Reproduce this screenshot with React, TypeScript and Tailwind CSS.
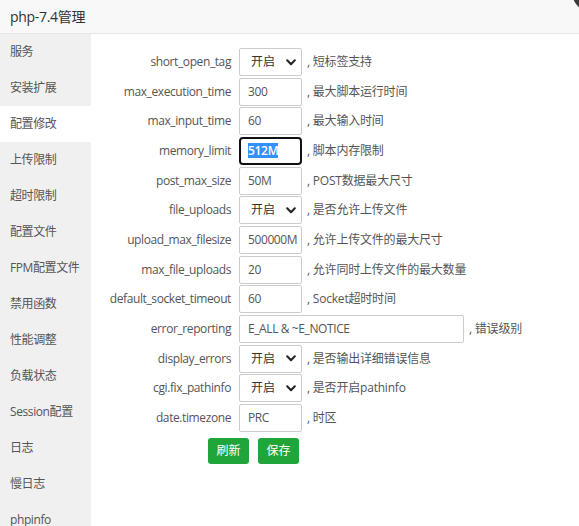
import React from "react";

const font = { fontFamily: '"Open Sans", "Noto Sans CJK SC", sans-serif' };

type Row =
  | { label: string; kind: "select"; desc: string }
  | { label: string; kind: "input"; value: string; desc: string; wide?: boolean; focus?: boolean };

const rows: Row[] = [
  { label: "short_open_tag", kind: "select", desc: ", 短标签支持" },
  { label: "max_execution_time", kind: "input", value: "300", desc: ", 最大脚本运行时间" },
  { label: "max_input_time", kind: "input", value: "60", desc: ", 最大输入时间" },
  { label: "memory_limit", kind: "input", value: "512M", desc: ", 脚本内存限制", focus: true },
  { label: "post_max_size", kind: "input", value: "50M", desc: ", POST数据最大尺寸" },
  { label: "file_uploads", kind: "select", desc: ", 是否允许上传文件" },
  { label: "upload_max_filesize", kind: "input", value: "500000M", desc: ", 允许上传文件的最大尺寸" },
  { label: "max_file_uploads", kind: "input", value: "20", desc: ", 允许同时上传文件的最大数量" },
  { label: "default_socket_timeout", kind: "input", value: "60", desc: ", Socket超时时间" },
  { label: "error_reporting", kind: "input", value: "E_ALL & ~E_NOTICE", desc: ", 错误级别", wide: true },
  { label: "display_errors", kind: "select", desc: ", 是否输出详细错误信息" },
  { label: "cgi.fix_pathinfo", kind: "select", desc: ", 是否开启pathinfo" },
  { label: "date.timezone", kind: "input", value: "PRC", desc: ", 时区" },
];

const menu = [
  "服务",
  "安装扩展",
  "配置修改",
  "上传限制",
  "超时限制",
  "配置文件",
  "FPM配置文件",
  "禁用函数",
  "性能调整",
  "负载状态",
  "Session配置",
  "日志",
  "慢日志",
  "phpinfo",
];

function Chevron() {
  return (
    <svg width="10" height="7" viewBox="0 0 10 7" fill="none">
      <path d="M1.2 1.3 L5 5.2 L8.8 1.3" stroke="#222" strokeWidth="2" strokeLinecap="round" strokeLinejoin="round" />
    </svg>
  );
}

export default function App() {
  return (
    <div className="relative w-[579px] h-[526px] overflow-hidden bg-white" style={font}>
      <div className="h-[34px] bg-[#f8f8f8] border-b border-[#e6e6e6] pl-[10px] flex items-center text-[14px] text-[#333] tracking-[-0.3px]">
        php-7.4管理
      </div>
      <div className="absolute left-[572px] top-[-28px] w-[40px] h-[40px] rounded-full bg-[#3a3a3a]" />
      <div className="flex">
        <div className="w-[91px] h-[492px] bg-[#f0f0f0] flex flex-col">
          {menu.map((m, i) => (
            <div
              key={m}
              className={`h-[36px] shrink-0 pl-[10px] flex items-center text-[12px] text-[#555] tracking-[-0.4px] ${i === 2 ? "bg-white" : ""}`}
            >
              {m}
            </div>
          ))}
        </div>
        <div className="flex-1 pt-[14px]">
          <div className="flex flex-col gap-[1.67px]">
            {rows.map((r) => (
              <div key={r.label} className="flex items-center h-[28px]">
                <div className="w-[148px] pr-[8px] text-right text-[12px] text-[#555] whitespace-nowrap tracking-[-0.4px]">{r.label}</div>
                {r.kind === "select" ? (
                  <div className="w-[63px] h-[28px] border border-[#ccc] rounded-[2px] flex items-center justify-between pl-[11px] pr-[5px] text-[12px] text-[#333]">
                    <span>开启</span>
                    <Chevron />
                  </div>
                ) : r.focus ? (
                  <div className="w-[63px] h-[28px] border-2 border-[#111] rounded-[4px] flex items-center pl-[7px] text-[12px] tracking-[-0.3px]">
                    <span className="bg-[#3390ff] text-white font-semibold leading-[15px]">{r.value}</span>
                  </div>
                ) : (
                  <div
                    className={`${r.wide ? "w-[225px]" : "w-[63px]"} h-[28px] border border-[#ccc] rounded-[2px] flex items-center pl-[8px] text-[12px] text-[#555] whitespace-nowrap overflow-hidden tracking-[-0.4px]`}
                  >
                    {r.value}
                  </div>
                )}
                <div className="ml-[5px] text-[12px] text-[#555] whitespace-nowrap tracking-[-0.2px]">{r.desc}</div>
              </div>
            ))}
          </div>
          <div className="flex gap-[9px] ml-[117px] mt-[6px]">
            <div className="w-[41px] h-[26px] bg-[#20a53a] rounded-[3px] text-white text-[12px] flex items-center justify-center">刷新</div>
            <div className="w-[41px] h-[26px] bg-[#20a53a] rounded-[3px] text-white text-[12px] flex items-center justify-center">保存</div>
          </div>
        </div>
      </div>
    </div>
  );
}
